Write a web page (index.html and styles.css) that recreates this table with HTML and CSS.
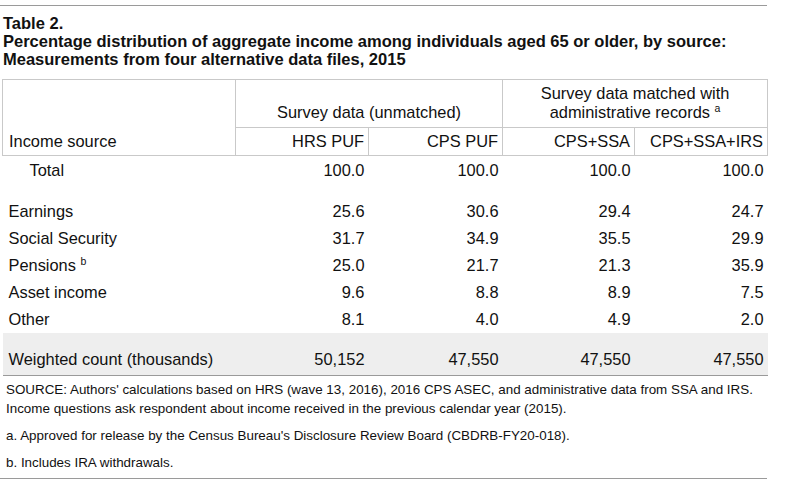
FILE: index.html
```html
<!DOCTYPE html>
<html>
<head>
<meta charset="utf-8">
<link rel="stylesheet" href="styles.css">
</head>
<body>
<div class="page">
  <div class="caption">
    <div>Table 2.</div>
    <div>Percentage distribution of aggregate income among individuals aged 65 or older, by source: Measurements from four alternative data files, 2015</div>
  </div>
  <table class="data">
    <colgroup>
      <col class="c1"><col class="c2"><col class="c3"><col class="c4"><col class="c5">
    </colgroup>
    <thead>
      <tr class="h1">
        <th rowspan="2" class="stub">Income source</th>
        <th colspan="2" class="group">Survey data (unmatched)</th>
        <th colspan="2" class="group">Survey data matched with<br>administrative records <sup>a</sup></th>
      </tr>
      <tr class="h2">
        <th class="num">HRS PUF</th>
        <th class="num">CPS PUF</th>
        <th class="num">CPS+SSA</th>
        <th class="num">CPS+SSA+IRS</th>
      </tr>
    </thead>
    <tbody>
      <tr class="total"><td class="indent">Total</td><td>100.0</td><td>100.0</td><td>100.0</td><td>100.0</td></tr>
      <tr class="first"><td>Earnings</td><td>25.6</td><td>30.6</td><td>29.4</td><td>24.7</td></tr>
      <tr><td>Social Security</td><td>31.7</td><td>34.9</td><td>35.5</td><td>29.9</td></tr>
      <tr><td>Pensions <sup>b</sup></td><td>25.0</td><td>21.7</td><td>21.3</td><td>35.9</td></tr>
      <tr><td>Asset income</td><td>9.6</td><td>8.8</td><td>8.9</td><td>7.5</td></tr>
      <tr><td>Other</td><td>8.1</td><td>4.0</td><td>4.9</td><td>2.0</td></tr>
      <tr class="count"><td>Weighted count (thousands)</td><td>50,152</td><td>47,550</td><td>47,550</td><td>47,550</td></tr>
    </tbody>
  </table>
  <div class="notes">
    <p>SOURCE: Authors' calculations based on HRS (wave 13, 2016), 2016 CPS ASEC, and administrative data from SSA and IRS.<br>Income questions ask respondent about income received in the previous calendar year (2015).</p>
    <p>a. Approved for release by the Census Bureau's Disclosure Review Board (CBDRB-FY20-018).</p>
    <p>b. Includes IRA withdrawals.</p>
  </div>
</div>
</body>
</html>
```

FILE: styles.css
```css
html, body {
  margin: 0;
  padding: 0;
  background: #ffffff;
}
body {
  font-family: "Liberation Sans", Arial, sans-serif;
  color: #111111;
}
.page {
  width: 767px;
  padding-top: 5px;
}
.caption {
  border-top: 1px solid #9a9a9a;
  padding: 8px 0 0 3px;
  font-weight: bold;
  font-size: 16.5px;
  line-height: 18px;
}
.data {
  margin-top: 11px;
  margin-left: 2px;
  width: 766px;
  border-collapse: collapse;
  table-layout: fixed;
  font-size: 16.4px;
  line-height: 19px;
}
.c1 { width: 233px; }
.c2 { width: 133px; }
.c3 { width: 134px; }
.c4 { width: 132px; }
.c5 { width: 133px; }
.data th {
  font-weight: normal;
  border: 1px solid #c9c9c9;
  padding: 4px 4px 4px 6px;
}
.data th.stub {
  text-align: left;
  vertical-align: bottom;
}
.data th.group {
  text-align: center;
  vertical-align: bottom;
  padding: 0 4px 5px 4px;
}
.h1 { height: 48px; }
.h2 th { text-align: right; }
.data sup {
  font-size: 10.5px;
  line-height: 0;
  vertical-align: 6px;
}
.data td {
  padding: 4px 4px 4px 6px;
  text-align: right;
}
.data td:first-child { text-align: left; }
.data td.indent { padding-left: 27px; }
.total td { padding-top: 5px; }
.first td { padding-top: 18px; }
.count td {
  background: #eeeeee;
  padding-top: 17px;
  padding-bottom: 6px;
  border-bottom: 1px solid #9a9a9a;
}
.notes {
  padding: 4px 0 6px 6px;
  font-size: 13.4px;
  line-height: 19px;
  border-bottom: 1px solid #9a9a9a;
}
.notes p {
  margin: 0 0 8px 0;
}
.notes p:last-child { margin-bottom: 0; }
```
